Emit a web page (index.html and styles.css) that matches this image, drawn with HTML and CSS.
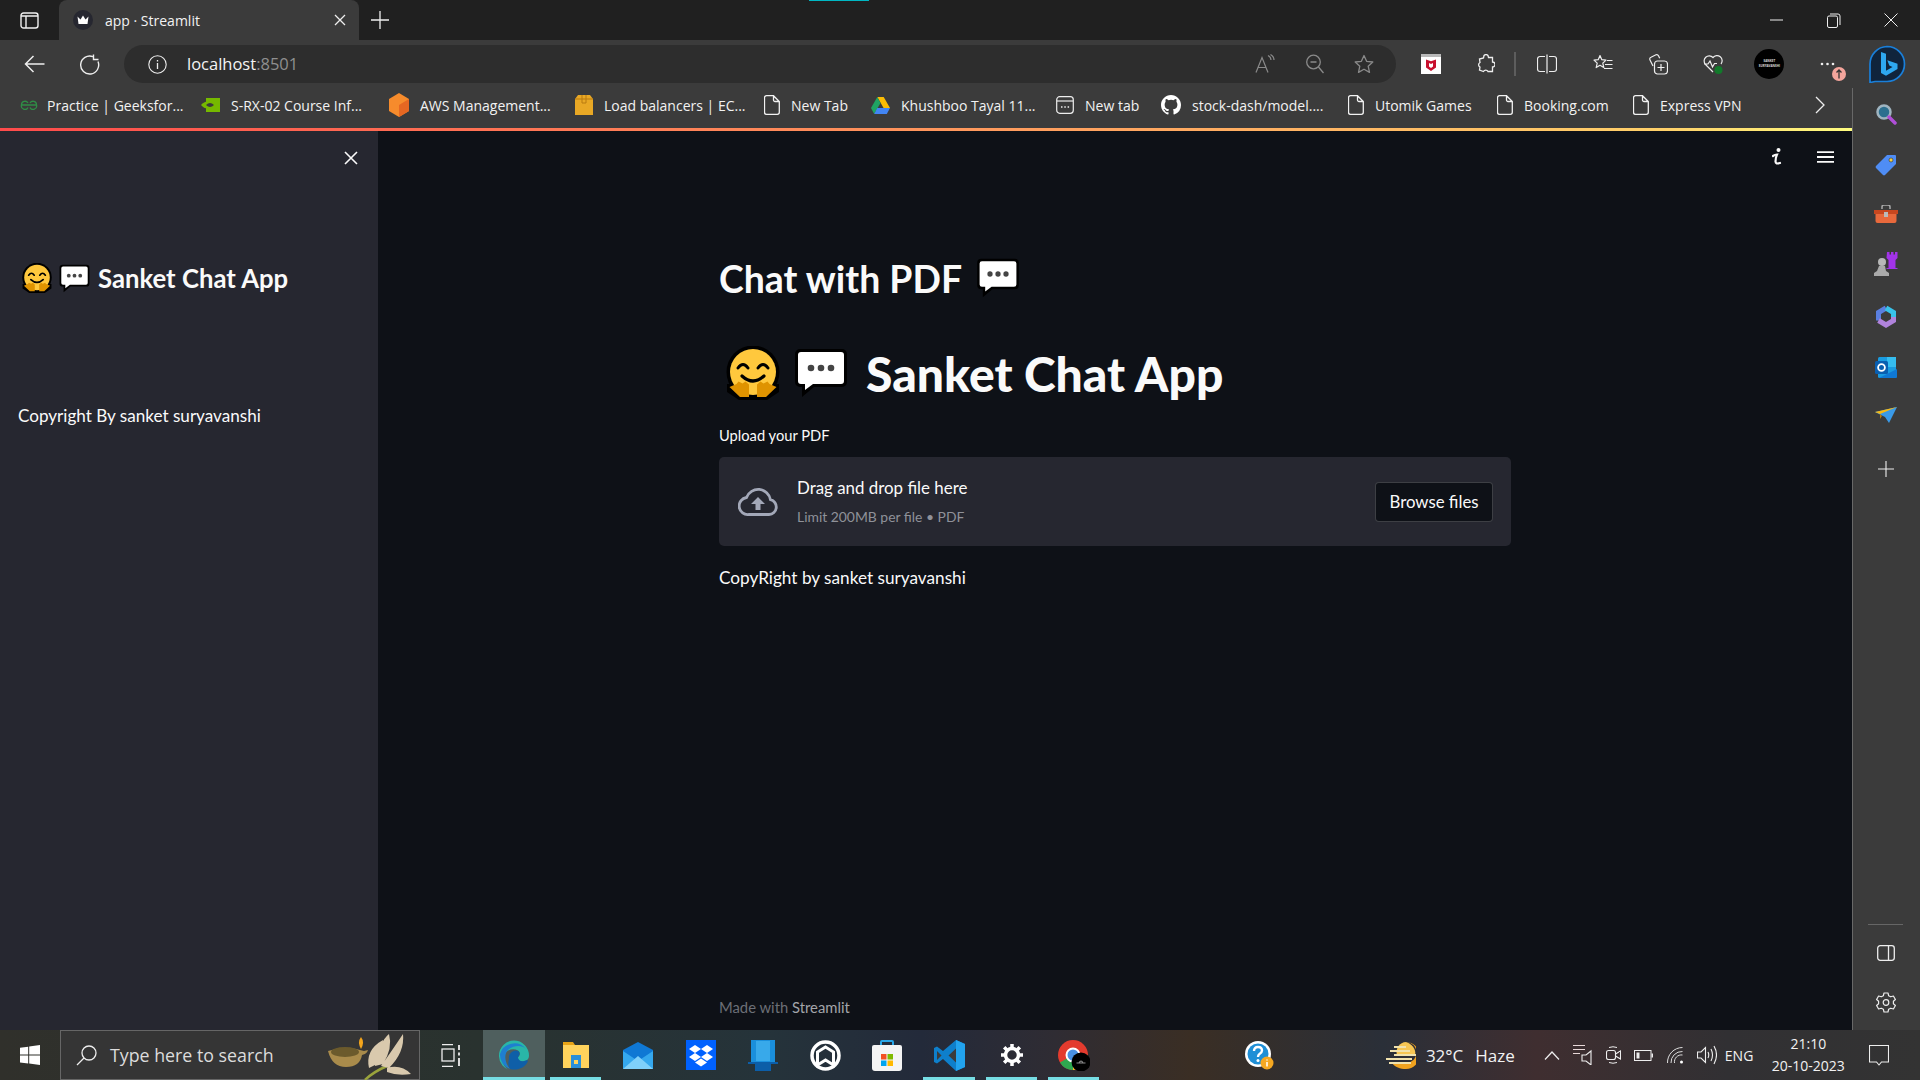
FILE: index.html
```html
<!DOCTYPE html>
<html lang="en">
<head>
  <meta charset="UTF-8">
  <title>app · Streamlit</title>
  <link rel="stylesheet" href="styles.css">
</head>
<body>

  <svg class="defs" width="0" height="0">
    <symbol id="doc" viewBox="0 0 16 20">
      <path d="M2.5 .7h7l5.8 5.8v10.8a2 2 0 0 1-2 2h-10.800a2 2 0 0 1-2-2v-14.600a2 2 0 0 1 2-2zM9.500 .7v4.300a1.500 1.500 0 0 0 1.500 1.500h4.300" fill="none" stroke="#f2f2f2" stroke-width="1.300"/>
    </symbol>
    <symbol id="hug" viewBox="0 0 54 54">
      <circle cx="27" cy="26" r="26.500" fill="#000"/>
      <path d="M1 38h52v8l-12 8h-28l-12-8z" fill="#000"/>
      <circle cx="27" cy="26" r="23" fill="#ffc83d"/>
      <path d="M12 22q5-7 10 0M32 22q5-7 10 0" fill="none" stroke="#000" stroke-width="3" stroke-linecap="round"/>
      <path d="M16 30q11 10 22 0" fill="none" stroke="#000" stroke-width="3.200" stroke-linecap="round"/>
      <path d="M3.500 41l7-3 2-2.500 4 2 3-2 3.500 3v12.500h-9z" fill="#df9300"/>
      <path d="M50.500 41l-7-3-2-2.500-4 2-3-2-3.500 3v12.500h9z" fill="#df9300"/>
    </symbol>
    <symbol id="bubble" viewBox="0 0 54 50">
      <path d="M6 1h42a5 5 0 0 1 5 5v28a5 5 0 0 1-5 5h-28l-12 10v-10h-2a5 5 0 0 1-5-5v-28a5 5 0 0 1 5-5z" fill="#000"/>
      <path d="M7 4h40a3 3 0 0 1 3 3v26a3 3 0 0 1-3 3h-28l-8 6v-6h-4a3 3 0 0 1-3-3v-26a3 3 0 0 1 3-3z" fill="#fff"/>
      <circle cx="17" cy="20" r="3.300" fill="#444"/><circle cx="27" cy="20" r="3.300" fill="#444"/><circle cx="37" cy="20" r="3.300" fill="#444"/>
    </symbol>
  </svg>

  <!-- barra de abas -->
  <div class="tabstrip">
    <div class="tab-toggle">
      <svg width="19" height="17" viewBox="0 0 19 17"><rect x="1" y="1" width="17" height="15" rx="2.500" fill="none" stroke="#f0f0f0" stroke-width="1.400"/><path d="M1 4h17M6 4v12" stroke="#f0f0f0" stroke-width="1.400"/></svg>
    </div>
    <div class="tab">
      <svg class="tab-favicon" width="20" height="20" viewBox="0 0 20 20"><circle cx="10" cy="10" r="10" fill="#262730"/><path d="M4.500 6.500l3 3 2.500-4 2.500 4 3-3-1 7.500h-9z" fill="#fff"/></svg>
      <span class="tab-title">app · Streamlit</span>
      <svg class="tab-close" width="12" height="12" viewBox="0 0 12 12"><path d="M1 1l10 10M11 1l-10 10" stroke="#eee" stroke-width="1.300"/></svg>
    </div>
    <svg class="tab-new" width="18" height="18" viewBox="0 0 18 18"><path d="M9 0v18M0 9h18" stroke="#eee" stroke-width="1.300"/></svg>
    <div class="tab-marker"></div>
    <div class="win-buttons">
      <div class="win-btn"><svg width="13" height="2" viewBox="0 0 13 2"><path d="M0 1h13" stroke="#eee"/></svg></div>
      <div class="win-btn"><svg width="14" height="15" viewBox="0 0 14 15"><rect x=".5" y="3" width="10" height="11.500" rx="1.500" fill="none" stroke="#eee"/><path d="M3 1h8a2 2 0 0 1 2 2v9" fill="none" stroke="#eee"/></svg></div>
      <div class="win-btn"><svg width="14" height="14" viewBox="0 0 14 14"><path d="M.5 .5l13 13M13.500 .5l-13 13" stroke="#eee"/></svg></div>
    </div>
  </div>

  <!-- barra de endereco -->
  <div class="toolbar">
    <div class="nav-btn">
      <svg width="21" height="18" viewBox="0 0 21 18"><path d="M20.500 9h-19M9.500 1l-8 8 8 8" fill="none" stroke="#eee" stroke-width="1.500"/></svg>
    </div>
    <div class="nav-btn">
      <svg width="21" height="21" viewBox="0 0 21 21"><path d="M13.800 2.600a9 9 0 1 0 5.200 5M14.500 .5v5h5" fill="none" stroke="#eee" stroke-width="1.400"/></svg>
    </div>
    <div class="address">
      <svg class="address-info" width="19" height="19" viewBox="0 0 19 19"><circle cx="9.500" cy="9.500" r="8.700" fill="none" stroke="#eee" stroke-width="1.100"/><path d="M9.500 8v6M9.500 5v1.400" stroke="#eee" stroke-width="1.300"/></svg>
      <span class="address-host">localhost<span class="address-port">:8501</span></span>
      <div class="address-tools">
        <div class="address-tool">
          <svg width="20" height="20" viewBox="0 0 20 20"><path d="M1 18.500l6-15 6 15M3.200 13.500h7.600M13 1.500q3 1.500 3 4.500M15.500 .5q3.500 2 3.500 5.500" fill="none" stroke="#8a8a8a" stroke-width="1.200"/></svg>
        </div>
        <div class="address-tool">
          <svg width="18" height="20" viewBox="0 0 18 20"><circle cx="7.500" cy="8" r="6.800" fill="none" stroke="#8a8a8a" stroke-width="1.300"/><path d="M4.500 8h6M12.500 13l5 6" stroke="#8a8a8a" stroke-width="1.300"/></svg>
        </div>
        <div class="address-tool">
          <svg width="20" height="20" viewBox="0 0 20 20"><path d="M10 1.500l2.600 5.800 6.200.7-4.600 4.200 1.300 6.200-5.500-3.200-5.500 3.200 1.300-6.200-4.600-4.200 6.200-.7z" fill="none" stroke="#8a8a8a" stroke-width="1.300" stroke-linejoin="round"/></svg>
        </div>
      </div>
    </div>
    <div class="tools">
      <div class="tool">
        <svg width="20" height="20" viewBox="0 0 20 20"><rect width="20" height="20" fill="#fff"/><rect width="20" height="3" fill="#b9b9b9"/><path d="M5 5.500l5 1.800 5-1.800v8l-5 3.500-5-3.500z" fill="#c8102e"/><path d="M8 9l2 1 2-1v3.500l-2 1.500-2-1.500z" fill="#fff"/></svg>
      </div>
      <div class="tool">
        <svg width="18" height="21" viewBox="0 0 18 21"><path d="M7 1.500a2.500 2.500 0 0 1 4 0l.5 2h4v4.500a2.500 2.500 0 0 1 0 5v4.500h-4.500a2.500 2.500 0 0 0-4.500 0l-4-1.500.5-3a2.500 2.500 0 0 1 0-4.500l-.5-3.500 4-1z" fill="none" stroke="#eee" stroke-width="1.300"/></svg>
      </div>
      <div class="tool-sep"></div>
      <div class="tool">
        <svg width="20" height="20" viewBox="0 0 20 20"><path d="M8 2.500h-5a2.500 2.500 0 0 0-2.500 2.500v10a2.500 2.500 0 0 0 2.500 2.500h5M12 2.500h5a2.500 2.500 0 0 1 2.500 2.500v10a2.500 2.500 0 0 1-2.500 2.500h-5M10 .5v19" fill="none" stroke="#eee" stroke-width="1.200"/></svg>
      </div>
      <div class="tool">
        <svg width="20" height="20" viewBox="0 0 20 20"><path d="M7 1.500l1.800 4.200 4.200.4-3.200 3 1 4.500-3.800-2.300-3.800 2.300 1-4.500-3.200-3 4.200-.4zM14 6.500h5.500M12 10.500h7.500M11 14.500h8.500" fill="none" stroke="#eee" stroke-width="1.200" stroke-linejoin="round"/></svg>
      </div>
      <div class="tool">
        <svg width="20" height="21" viewBox="0 0 20 21"><path d="M5 12l-3-6a2 2 0 0 1 1-2.800l5-2.400a2 2 0 0 1 2.500 1l1.200 2.400" fill="none" stroke="#eee" stroke-width="1.200"/><rect x="6.500" y="7" width="13" height="13" rx="3" fill="#3b3b3b" stroke="#eee" stroke-width="1.200"/><path d="M13 10v7M9.500 13.500h7" stroke="#eee" stroke-width="1.200"/></svg>
      </div>
      <div class="tool">
        <svg width="21" height="21" viewBox="0 0 21 21"><path d="M10 18l-7.500-7.500a5 5 0 0 1 7.500-7 5 5 0 0 1 8 6.500M1 10h4l2-3 2.500 6 2-3.500h2.500" fill="none" stroke="#eee" stroke-width="1.200"/><circle cx="15.500" cy="16" r="4" fill="#127a2b"/></svg>
      </div>
      <div class="tool">
        <div class="profile">SANKET<br>SURYAVANSHI</div>
      </div>
      <div class="tool tool-more">
        <svg width="15" height="4" viewBox="0 0 15 4"><circle cx="2" cy="2" r="1.300" fill="#eee"/><circle cx="7.500" cy="2" r="1.300" fill="#eee"/><circle cx="13" cy="2" r="1.300" fill="#eee"/></svg>
        <svg class="more-badge" width="14" height="14" viewBox="0 0 14 14"><circle cx="7" cy="7" r="7" fill="#f4a59c"/><path d="M7 11.500v-8M4.500 5.500l2.500-2.500 2.500 2.500" fill="none" stroke="#333" stroke-width="1.300"/></svg>
      </div>
      <div class="bing">
        <svg width="38" height="38" viewBox="0 0 38 38"><path d="M19 1.500a17.500 17.500 0 0 1 0 35h-12l-5 1v-18.500a17.500 17.500 0 0 1 17-17.500z" fill="#10243c" stroke="#1a7fd9" stroke-width="1.700"/><path d="M13 7l5 1.800v17l6.500-3.800-3.200-1.500-2-5.300 10.200 3.500v5.300l-11.500 6.800-5-2.800z" fill="#2ea8f0"/></svg>
      </div>
    </div>
  </div>

  <div class="body-row">
    <div class="page-col">

      <!-- favoritos -->
      <div class="bookmarks">
        <div class="bm">
          <svg class="bm-icon" width="18" height="10" viewBox="0 0 18 10"><path d="M1 5h16M1.500 5a3.500 3.500 0 0 1 6.500-2M16.500 5a3.500 3.500 0 0 0-6.500-2M1.500 5a3.500 3.500 0 0 0 6.500 2.500M16.500 5a3.500 3.500 0 0 1-6.500 2.500" fill="none" stroke="#2f8d46" stroke-width="1.300"/></svg>
          <span>Practice | Geeksfor...</span>
        </div>
        <div class="bm">
          <svg class="bm-icon" width="19" height="14" viewBox="0 0 19 14"><rect x="5" width="14" height="14" fill="#76b900"/><path d="M0 7q6-7 14 0q-8 7-14 0z" fill="#76b900"/><path d="M5 7q4-4 8 0q-4 4-8 0z" fill="#3b3b3b"/></svg>
          <span>S-RX-02 Course Inf...</span>
        </div>
        <div class="bm">
          <svg class="bm-icon" width="20" height="24" viewBox="0 0 20 24"><path d="M10 0l10 6v12l-10 6-10-6v-12z" fill="#f68b2c"/><path d="M10 12l10-6v12l-10 6z" fill="#e66722"/></svg>
          <span>AWS Management...</span>
        </div>
        <div class="bm">
          <svg class="bm-icon" width="18" height="20" viewBox="0 0 18 20"><path d="M3 0h12l3 4v16h-18v-16z" fill="#e9a825"/><path d="M0 4h18M7 0v8h4v-8" fill="none" stroke="#b97a10"/></svg>
          <span>Load balancers | EC...</span>
        </div>
        <div class="bm">
          <svg class="bm-icon"  width="16" height="20"><use href="#doc"/></svg>
          <span>New Tab</span>
        </div>
        <div class="bm">
          <svg class="bm-icon" width="19" height="17" viewBox="0 0 19 17"><path d="M6.300 0h6.400l6.300 11h-6.400z" fill="#fbbc04"/><path d="M6.300 0l-6.300 11 3.200 6 6.300-11z" fill="#1fa463"/><path d="M3.200 17h12.600l3.200-6h-12.700z" fill="#4285f4"/></svg>
          <span>Khushboo Tayal 11...</span>
        </div>
        <div class="bm">
          <svg class="bm-icon" width="18" height="18" viewBox="0 0 18 18"><rect x=".7" y=".7" width="16.600" height="16.600" rx="3" fill="none" stroke="#eee" stroke-width="1.200"/><path d="M1 5h16" stroke="#eee" stroke-width="1.200"/><path d="M5 11h1.500M8.300 11h1.500M11.600 11h1.500" stroke="#eee" stroke-width="1.600"/></svg>
          <span>New tab</span>
        </div>
        <div class="bm">
          <svg class="bm-icon" width="20" height="20" viewBox="0 0 16 16"><path fill="#fff" d="M8 0C3.580 0 0 3.580 0 8c0 3.540 2.290 6.530 5.470 7.590.4.070.55-.170.550-.380 0-.190-.010-.820-.010-1.490-2.010.370-2.530-.490-2.690-.940-.090-.230-.480-.940-.820-1.130-.280-.150-.680-.520-.010-.530.630-.010 1.080.580 1.230.820.720 1.210 1.870.870 2.330.660.070-.520.280-.870.510-1.070-1.780-.200-3.640-.890-3.640-3.950 0-.870.310-1.590.820-2.150-.080-.200-.360-1.020.080-2.120 0 0 .670-.210 2.200.820a7.420 7.420 0 0 1 4 0c1.530-1.040 2.200-.820 2.200-.820.440 1.100.160 1.920.080 2.120.510.560.820 1.270.820 2.150 0 3.070-1.870 3.750-3.650 3.950.290.250.540.730.540 1.480 0 1.070-.010 1.930-.010 2.200 0 .210.150.460.550.380A8.010 8.010 0 0 0 16 8c0-4.420-3.580-8-8-8z"/></svg>
          <span>stock-dash/model....</span>
        </div>
        <div class="bm">
          <svg class="bm-icon" width="16" height="20"><use href="#doc"/></svg>
          <span>Utomik Games</span>
        </div>
        <div class="bm">
          <svg class="bm-icon" width="16" height="20"><use href="#doc"/></svg>
          <span>Booking.com</span>
        </div>
        <div class="bm">
          <svg class="bm-icon" width="16" height="20"><use href="#doc"/></svg>
          <span>Express VPN</span>
        </div>
        <svg class="bm-more" width="10" height="18" viewBox="0 0 10 18"><path d="M1 1l8 8-8 8" fill="none" stroke="#eee" stroke-width="1.300"/></svg>
      </div>
      <div class="deco-line"></div>

      <div class="app">
        <aside class="sidebar">
          <div class="side-close">
            <svg width="14" height="14" viewBox="0 0 14 14"><path d="M1 1l12 12M13 1l-12 12" stroke="#fafafa" stroke-width="1.600"/></svg>
          </div>
          <h2 class="side-title">
            <svg width="30" height="30"><use href="#hug"/></svg>
            <svg width="31" height="29"><use href="#bubble"/></svg>
            <span>Sanket Chat App</span>
          </h2>
          <p class="side-copy">Copyright By sanket suryavanshi</p>
        </aside>

        <main class="main">
          <div class="main-head">
            <svg width="10" height="19" viewBox="0 0 10 19"><circle cx="6.500" cy="2" r="2" fill="#fafafa"/><path d="M1 8q2-1.500 4-1.500-1.500 3-1.500 7 0 3 4.500 1.500" fill="none" stroke="#fafafa" stroke-width="2.200" stroke-linecap="round"/></svg>
            <svg width="17" height="12" viewBox="0 0 17 12"><path d="M0 1.200h17M0 6h17M0 10.800h17" stroke="#fafafa" stroke-width="1.800"/></svg>
          </div>
          <div class="block">
            <h2 class="sub-title">
              <span>Chat with PDF</span>
              <svg width="44" height="40"><use href="#bubble"/></svg>
            </h2>
            <h1 class="app-title">
              <svg width="54" height="54"><use href="#hug"/></svg>
              <svg width="54" height="50"><use href="#bubble"/></svg>
              <span>Sanket Chat App</span>
            </h1>
            <label class="up-label">Upload your PDF</label>
            <div class="dropzone">
              <svg class="cloud" width="40" height="28" viewBox="0 0 40 28"><path d="M11 26.500h20a7.500 7.500 0 0 0 1.500-14.800 12.500 12.500 0 0 0-24-2.200 8.500 8.500 0 0 0 2.500 17z" fill="none" stroke="#a3a8b8" stroke-width="2.800"/><path d="M20 9l7 7h-4.500v6h-5v-6h-4.500z" fill="#a3a8b8"/></svg>
              <div class="drop-text">
                <div class="drop-main">Drag and drop file here</div>
                <div class="drop-sub">Limit 200MB per file • PDF</div>
              </div>
              <button class="browse">Browse files</button>
            </div>
            <p class="main-copy">CopyRight by sanket suryavanshi</p>
          </div>
          <div class="made-with">Made with <span class="made-name">Streamlit</span></div>
        </main>
      </div>
    </div>

    <!-- painel lateral do edge -->
    <div class="edge-panel">
      <svg class="edge-icon" width="22" height="22" viewBox="0 0 22 22"><circle cx="9" cy="9" r="6.500" fill="#2c6f8f" stroke="#9fb4c0" stroke-width="2.500"/><path d="M14 14l6 6" stroke="#b04fd8" stroke-width="3.500" stroke-linecap="round"/></svg>
      <svg class="edge-icon" width="22" height="22" viewBox="0 0 22 22"><path d="M12 1h8a1 1 0 0 1 1 1v8l-11 11a1.500 1.500 0 0 1-2 0l-7-7a1.500 1.500 0 0 1 0-2z" fill="#4f8df5"/><circle cx="16" cy="6" r="2" fill="#f4d03f" stroke="#333" stroke-width=".6"/></svg>
      <svg class="edge-icon" width="24" height="18" viewBox="0 0 24 18"><path d="M8 4v-2a2 2 0 0 1 2-2h4a2 2 0 0 1 2 2v2" fill="none" stroke="#aaa" stroke-width="1.500"/><path d="M0 5h24v4h-24z" fill="#c8471f"/><path d="M1.500 9h21v7a2 2 0 0 1-2 2h-17a2 2 0 0 1-2-2z" fill="#e8693c"/><rect x="10" y="7" width="4" height="5" fill="#bbb"/></svg>
      <svg class="edge-icon" width="24" height="24" viewBox="0 0 24 24"><path d="M13 0h2.500v2.500h1.500v-2.500h2.500v2.500h1.500v-2.500h2.500v6l-2 2v8l2 0v1h-11v-1l2 0v-8l-2-2z" fill="#a233e8"/><circle cx="8" cy="10" r="4" fill="#b8b8b8"/><path d="M5 14h6l1 5 3 2v3h-15v-3l3-2z" fill="#aaa"/></svg>
      <svg class="edge-icon" width="22" height="23" viewBox="0 0 22 23" fill="none" stroke-width="5"><path d="M3.500 15.500v-8l7.500-4.500" stroke="#5a7fe0"/><path d="M11 3l7.500 4.500v4.500" stroke="#38c3ea"/><path d="M18.500 12v3.500l-7.500 4.500-7.500-4.500" stroke="#b083dc"/></svg>
      <svg class="edge-icon" width="22" height="21" viewBox="0 0 22 21"><rect x="3" y="0" width="18" height="21" rx="1.500" fill="#1a9be0"/><path d="M12 0h9v10h-9z" fill="#35bdf0"/><path d="M4 21l18-9v8a1 1 0 0 1-1 1z" fill="#0f78d4"/><rect x="0" y="4" width="13" height="13" rx="1.500" fill="#0a5fb0"/><circle cx="6.500" cy="10.500" r="3.400" fill="none" stroke="#fff" stroke-width="1.800"/></svg>
      <svg class="edge-icon" width="22" height="16" viewBox="0 0 22 16"><path d="M0 5l22-5-8 16-4-6z" fill="#3a9ae8"/><path d="M0 5l22-5-17 7z" fill="#f8b912"/><path d="M5 7v5l2-3z" fill="#b87a10"/></svg>
      <svg class="edge-icon edge-plus" width="16" height="16" viewBox="0 0 16 16"><path d="M8 0v16M0 8h16" stroke="#eee" stroke-width="1.100"/></svg>

      <div class="edge-foot">
        <div class="edge-sep"></div>
        <svg width="18" height="16" viewBox="0 0 18 16"><rect x=".7" y=".7" width="16.600" height="14.600" rx="2.500" fill="none" stroke="#eee" stroke-width="1.300"/><path d="M11.500 1v14" stroke="#eee" stroke-width="1.300"/></svg>
        <svg width="20" height="21" viewBox="0 0 20 21"><path d="M8 1h4l.6 2.700 2.200 1.100 2.600-.8 2 3.500-2 1.800v2.400l2 1.800-2 3.500-2.600-.8-2.200 1.100-.6 2.700h-4l-.6-2.700-2.200-1.100-2.600.8-2-3.500 2-1.800v-2.400l-2-1.800 2-3.500 2.600.8 2.200-1.100z" fill="none" stroke="#eee" stroke-width="1.200" stroke-linejoin="round"/><circle cx="10" cy="10.500" r="2.800" fill="none" stroke="#eee" stroke-width="1.200"/></svg>
      </div>
    </div>
  </div>

  <!-- barra de tarefas -->
  <footer class="taskbar">
    <div class="start">
      <svg width="20" height="20" viewBox="0 0 20 20"><path d="M0 2.800l8.200-1.100v7.900h-8.200zM9.200 1.500l10.800-1.500v9.600h-10.800zM0 10.600h8.200v7.900l-8.200-1.100zM9.200 10.600h10.800v9.400l-10.800-1.500z" fill="#fff"/></svg>
    </div>
    <div class="search">
      <svg width="21" height="21" viewBox="0 0 21 21"><circle cx="13" cy="8" r="7" fill="none" stroke="#eee" stroke-width="1.300"/><path d="M8 13l-7 7" stroke="#eee" stroke-width="1.300"/></svg>
      <span class="search-text">Type here to search</span>
      <svg class="search-art" width="84" height="50" viewBox="0 0 84 50">
        <path d="M38 50q8-8 22-14" fill="none" stroke="#9aa33c" stroke-width="2.500"/>
        <path d="M42 38q-4-18 14-28q-2 14 2 20zM48 36q4-24 14-32q4 14-6 30zM54 36q10-14 22-32q2 18-14 34zM60 38q14-4 24 6q-14 2-24-2z" fill="#d9c9ad"/>
        <path d="M34 7q4 5 0 12q-4-7 0-12z" fill="#f4a51c"/>
        <path d="M1 21q18-6 36 0l4-1q-1 4-6 5q-2 12-16 12q-14 0-18-16z" fill="#a98b4b"/>
        <ellipse cx="18" cy="22" rx="14" ry="5" fill="#6b5a2c"/>
      </svg>
    </div>
    <div class="taskview">
      <svg width="20" height="23" viewBox="0 0 20 23"><path d="M1 .7h11M1 22.300h11M14 22.300h0" fill="none" stroke="#eee" stroke-width="1.300"/><rect x="1" y="5" width="12" height="12" fill="none" stroke="#eee" stroke-width="1.300"/><path d="M18 1v5M18 8.500v3M18 14v8" stroke="#eee" stroke-width="1.800"/></svg>
    </div>

    <div class="task-apps">
      <div class="task-app is-active is-open">
        <svg width="31" height="31" viewBox="0 0 31 31"><path d="M15 .5a15 15 0 0 1 15 15c0 4-3 6-7 6-3 0-5-2-5-4 3-1 4-5 1-7-6-3-14 0-15 8-1 6 3 11 8 12a15 15 0 0 1-12-15 15 15 0 0 1 15-15z" fill="#29b6a8"/><path d="M1 14a15 15 0 0 1 26-5c-3-4-12-4-17 0-6 5-4 14 1 20a15 15 0 0 1-10-15z" fill="#1f7fd0"/><path d="M10 19c-1-6 5-10 9-8 2 1 2 4 0 6 0 3 3 5 6 4 2-1 4-1 4 0-3 7-11 10-18 8-2-3-2-7-1-10z" fill="#0f5fa8"/></svg>
      </div>
      <div class="task-app is-open">
        <svg width="28" height="28" viewBox="0 0 28 28"><path d="M1 1h10l2 3h14v6h-26z" fill="#e8a416"/><rect x="1" y="4" width="26" height="23" fill="#ffd35c"/><path d="M9 14h10v13h-10z" fill="#2a8fd8"/><rect x="12" y="19" width="4" height="4" fill="#ffd35c"/></svg>
      </div>
      <div class="task-app">
        <svg width="30" height="27" viewBox="0 0 30 27"><path d="M0 8l15-8 15 8v19h-30z" fill="#0f78d4"/><path d="M0 9l15 10 15-10v18h-30z" fill="#35a8ee"/><path d="M0 27l15-13 15 13z" fill="#7fd0fa"/></svg>
      </div>
      <div class="task-app">
        <svg width="30" height="30" viewBox="0 0 30 30"><rect width="30" height="30" fill="#0061fe"/><path d="M9 5l6 4-6 4-6-4zM21 5l6 4-6 4-6-4zM9 13l6 4-6 4-6-4zM21 13l6 4-6 4-6-4zM15 18.500l6 4-6 4-6-4z" fill="#fff"/></svg>
      </div>
      <div class="task-app">
        <svg width="30" height="32" viewBox="0 0 30 32"><path d="M3 1h24v22h-24z" fill="#1a8fdc"/><path d="M8 2h14v20h-14z" fill="#38a9ea"/><path d="M0 23h30v2h-30z" fill="#0c5ea8"/><path d="M7 25h16v7h-16z" fill="#0c5ea8"/></svg>
      </div>
      <div class="task-app">
        <svg width="31" height="31" viewBox="0 0 31 31"><circle cx="15.500" cy="15.500" r="13.500" fill="none" stroke="#fff" stroke-width="3.500"/><path d="M15.500 7l8 5v13l-8-5-8 5v-13z" fill="none" stroke="#fff" stroke-width="3"/></svg>
      </div>
      <div class="task-app">
        <svg width="30" height="31" viewBox="0 0 30 31"><path d="M9 6v-4a1 1 0 0 1 1-1h10a1 1 0 0 1 1 1v4" fill="none" stroke="#29a7e8" stroke-width="2"/><path d="M2 5h26a2 2 0 0 1 2 2v21a3 3 0 0 1-3 3h-24a3 3 0 0 1-3-3v-21a2 2 0 0 1 2-2z" fill="#f4f4f4"/><rect x="9" y="14" width="5.500" height="5.500" fill="#f25022"/><rect x="15.500" y="14" width="5.500" height="5.500" fill="#7fba00"/><rect x="9" y="20.500" width="5.500" height="5.500" fill="#00a4ef"/><rect x="15.500" y="20.500" width="5.500" height="5.500" fill="#ffb900"/></svg>
      </div>
      <div class="task-app is-open">
        <svg width="31" height="31" viewBox="0 0 31 31"><path d="M22 0l9 4v23l-9 4-13-12-6 4.500-3-1.500v-14l3-1.500 6 4.500z" fill="#0e7fcb"/><path d="M22 0l9 4v23l-9 4z" fill="#22a3ee"/><path d="M22 8.500l-7.500 7 7.500 7z" fill="#3b3b3b"/><path d="M3 11l4.500 4.500-4.500 4.500z" fill="#3b3b3b"/></svg>
      </div>
      <div class="task-app is-open">
        <svg width="24" height="24" viewBox="0 0 24 24"><circle cx="12" cy="12" r="6.500" fill="none" stroke="#fff" stroke-width="3.500"/><path d="M12 1v5M12 18v5M1 12h5M18 12h5M4.200 4.200l3.500 3.500M16.300 16.300l3.500 3.500M19.800 4.200l-3.500 3.500M7.700 16.300l-3.500 3.500" stroke="#fff" stroke-width="3.500"/></svg>
      </div>
      <div class="task-app is-open">
        <svg width="32" height="31" viewBox="0 0 32 31"><circle cx="15" cy="15" r="15" fill="#e33b2e"/><path d="M15 15l-13 7.500a15 15 0 0 0 13 7.500z" fill="#2fa84f"/><path d="M15 15h15a15 15 0 0 1-15 15z" fill="#fbc02d"/><circle cx="15" cy="15" r="6.500" fill="#4a90e2" stroke="#fff" stroke-width="2"/><circle cx="23" cy="22" r="9.500" fill="#000"/><path d="M18.500 23h9M21 23q2-4 4 0" stroke="#888" stroke-width="1.200" fill="none"/></svg>
      </div>
    </div>

    <div class="help">
      <svg width="30" height="30" viewBox="0 0 30 30"><circle cx="14" cy="14" r="13" fill="#fff"/><circle cx="14" cy="14" r="10.500" fill="#1f8fd6"/><path d="M10 11q0-4 4-4t4 3.500q0 2-2.500 3.500-1.500 1-1.500 3" fill="none" stroke="#fff" stroke-width="2.400"/><circle cx="14" cy="20.500" r="1.500" fill="#fff"/><circle cx="23" cy="23" r="6.500" fill="#f6a821"/><path d="M23 22v4.500M23 19.500v1" stroke="#fff" stroke-width="1.500"/></svg>
    </div>
    <div class="weather">
      <svg width="30" height="27" viewBox="0 0 30 27"><path d="M20 0a13.500 13.500 0 0 1 0 27c-6 0-11-2-14-6h14a10 10 0 0 0 0-21z" fill="#f0a21f"/><path d="M11 13a10 10 0 0 1 9-13c9 3 10 10 9 14z" fill="#f7c653"/><path d="M8 5h12M4 9h20M8 13h22M0 17h26M3 21h22" stroke="#f1e2ad" stroke-width="2.200"/></svg>
      <span>32°C</span>
      <span class="weather-desc">Haze</span>
    </div>
    <div class="tray">
      <svg width="16" height="9" viewBox="0 0 16 9"><path d="M1 8.500l7-7.500 7 7.500" fill="none" stroke="#eee" stroke-width="1.200"/></svg>
      <svg width="19" height="20" viewBox="0 0 19 20"><path d="M0 .5h12M0 4.500h12M0 8.500h7" stroke="#e8d8d8" stroke-width="1.100"/><path d="M18 6v14l-5-4h-4v-6h4z" fill="none" stroke="#eee" stroke-width="1.100"/></svg>
      <svg width="15" height="18" viewBox="0 0 15 18"><path d="M3 1.500q4-1.500 8 0M3 16.500q4 1.500 8 0" fill="none" stroke="#eee"/><rect x=".5" y="4.500" width="9" height="9" rx="2" fill="none" stroke="#eee" stroke-width="1.100"/><path d="M9.500 8l5-3v8l-5-3" fill="none" stroke="#eee" stroke-width="1.100"/></svg>
      <svg width="19" height="11" viewBox="0 0 19 11"><rect x=".5" y=".5" width="16.500" height="10" fill="none" stroke="#eee"/><rect x="2.500" y="2.500" width="3" height="6" fill="#eee"/><rect x="17.500" y="3.500" width="1.500" height="4" fill="#eee"/></svg>
      <svg width="17" height="17" viewBox="0 0 17 17"><path d="M.5 16a15 15 0 0 1 15-15.500M4 16a11 11 0 0 1 11.500-11.500M7.500 16a7 7 0 0 1 8-8" fill="none" stroke="#ddd"/><circle cx="14.500" cy="15" r="1.500" fill="#fff"/></svg>
      <svg width="20" height="20" viewBox="0 0 20 20"><path d="M.5 7h3.500l4.500-4.500v15l-4.500-4.500h-3.500z" fill="none" stroke="#eee" stroke-width="1.100"/><path d="M11 7q1.500 3 0 6M14 4q3 6 0 12M17 1q5 9 0 18" fill="none" stroke="#eee" stroke-width="1.100"/></svg>
      <span class="tray-lang">ENG</span>
    </div>
    <div class="clock">
      <div>21:10</div>
      <div>20-10-2023</div>
    </div>
    <svg class="notif" width="20" height="21" viewBox="0 0 20 21"><path d="M.5 .5h19v16.500h-7l-2.500 3-2.500-3h-7z" fill="none" stroke="#eee" stroke-width="1.100"/></svg>
  </footer>

</body>
</html>
```

FILE: styles.css
```css
* { box-sizing: border-box; }
html, body { margin: 0; height: 100%; }
body {
  width: 1920px;
  height: 1080px;
  overflow: hidden;
  display: flex;
  flex-direction: column;
  background-color: #3b3b3b;
  color: #fafafa;
  font-family: "Open Sans", "Noto Sans", sans-serif;
}
svg { display: block; flex: none; }
.defs { position: absolute; }

/* abas */
.tabstrip {
  height: 40px;
  display: flex;
  align-items: center;
  background-color: #202020;
  position: relative;
}
.tab-toggle { width: 59px; display: flex; justify-content: center; }
.tab {
  width: 300px;
  height: 40px;
  display: flex;
  align-items: center;
  padding-left: 14px;
  background-color: #3b3b3b;
  border-radius: 8px 8px 0 0;
}
.tab-title { margin-left: 12px; font-size: 14px; color: #f2f2f2; }
.tab-close { margin-left: auto; margin-right: 13px; }
.tab-new { margin-left: 12px; }
.tab-marker {
  position: absolute;
  left: 809px;
  top: 0;
  width: 60px;
  height: 1px;
  background-color: #00b7c3;
}
.win-buttons { margin-left: auto; display: flex; }
.win-btn { width: 57.500px; display: flex; justify-content: center; align-items: center; }

/* endereco */
.toolbar {
  height: 48px;
  display: flex;
  align-items: center;
  background-color: #3b3b3b;
}
.nav-btn { width: 55px; display: flex; justify-content: center; margin-left: 7px; margin-right: -7.500px; }
.address {
  width: 1272px;
  height: 38px;
  margin-left: 15px;
  display: flex;
  align-items: center;
  padding: 0 7px 0 24px;
  background-color: #2d2d2d;
  border-radius: 19px;
}
.address-host { margin: 0 0 2px 20px; font-size: 16.500px; color: #f4f4f4; }
.address-port { color: #8f8f8f; }
.address-tools { margin-left: auto; display: flex; }
.address-tool { width: 49.500px; display: flex; justify-content: center; }
.tools { margin-left: 7px; display: flex; align-items: center; }
.tool { width: 55.600px; display: flex; justify-content: center; position: relative; }
.tool-sep { width: 5px; height: 24px; border-left: 2px solid #5d5d5d; }
.profile {
  width: 30px;
  height: 30px;
  border-radius: 50%;
  background-color: #000;
  color: #ddd;
  font-size: 3px;
  font-weight: 700;
  line-height: 5px;
  text-align: center;
  padding-top: 10px;
}
.tool-more { margin-left: 3px; }
.more-badge { position: absolute; left: 32px; top: 5px; }
.bing { margin-left: 12px; }

.body-row { flex: 1; display: flex; min-height: 0; }
.page-col { width: 1852px; display: flex; flex-direction: column; }

/* favoritos */
.bookmarks {
  height: 40px;
  padding: 0 0 6px 20px;
  display: grid;
  grid-template-columns: 181px 188px 186px 189px 107px 185px 105px 187px 149px 136px 182px 10px;
  align-items: center;
  background-color: #3b3b3b;
}
.bm { display: flex; align-items: center; font-size: 14px; color: #f2f2f2; white-space: nowrap; }
.bm-icon { margin-right: 11px; }
.bm:first-child .bm-icon { margin-right: 9px; }
.deco-line {
  height: 3px;
  background: linear-gradient(90deg, #ff4b4b, #ffd16a 90%, #fffd80);
}

.app { flex: 1; display: flex; min-height: 0; }

/* sidebar */
.sidebar { width: 378px; padding: 0 18px; background-color: #262730; font-family: Lato, "Open Sans", sans-serif; }
.side-close { height: 54px; display: flex; align-items: center; justify-content: flex-end; padding-right: 2px; }
.side-title {
  margin: 78px 0 0 4px;
  display: flex;
  align-items: center;
  gap: 7px;
  height: 30px;
  font-size: 25.700px;
  font-weight: 700;
}
.side-title span { margin-left: 1px; }
.side-copy { margin: 111px 0 0; font-size: 17.100px; line-height: 24px; }

/* main */
.main {
  flex: 1;
  display: flex;
  flex-direction: column;
  align-items: center;
  background-color: #0e1117;
  font-family: Lato, "Open Sans", sans-serif;
}
.main-head {
  width: 100%;
  height: 52px;
  display: flex;
  align-items: center;
  justify-content: flex-end;
  gap: 39px;
  padding-right: 18px;
}
.main-head svg:first-child { margin-right: -4px; }
.block { width: 792px; }
.sub-title {
  margin: 75px 0 0;
  height: 40px;
  display: flex;
  align-items: center;
  gap: 14px;
  font-size: 37.400px;
  font-weight: 700;
}
.app-title {
  margin: 48px 0 0 7px;
  height: 54px;
  display: flex;
  align-items: center;
  gap: 14px;
  font-size: 48px;
  font-weight: 900;
}
.app-title span { margin-left: 4px; }
.up-label { display: block; margin-top: 25px; font-size: 14.700px; line-height: 20px; }
.dropzone {
  height: 89px;
  margin-top: 12px;
  display: flex;
  align-items: center;
  padding: 0 18px 0 19px;
  background-color: #262730;
  border-radius: 5px;
}
.drop-text { margin-left: 19px; }
.drop-main { font-size: 16.900px; line-height: 22px; }
.drop-sub { margin-top: 8px; font-size: 13.900px; line-height: 20px; color: #8f9199; }
.browse {
  width: 118px;
  height: 40px;
  margin-left: auto;
  background-color: #0e1117;
  color: #fafafa;
  border: 1px solid rgba(250, 250, 250, 0.2);
  border-radius: 4px;
  font-family: inherit;
  font-size: 16.800px;
}
.main-copy { margin: 20px 0 0; font-size: 17.200px; line-height: 24px; }
.made-with {
  width: 792px;
  margin-top: auto;
  padding-bottom: 13px;
  font-size: 14.800px;
  line-height: 20px;
  color: #6c6f76;
}
.made-name { color: #a3a5aa; }

/* painel edge */
.edge-panel {
  width: 68px;
  display: flex;
  flex-direction: column;
  align-items: center;
  border-left: 1px solid #686868;
  background-color: #3b3b3b;
  padding-top: 15px;
  padding-right: 2px;
}
.edge-icon { margin-bottom: 29px; }
.edge-plus { margin-top: 9px; }
.edge-foot { margin-top: auto; display: flex; flex-direction: column; align-items: center; }
.edge-sep { width: 35px; height: 1px; background-color: #666; margin-bottom: 20px; }
.edge-foot svg:last-child { margin-top: 31px; margin-bottom: 17px; }

/* taskbar */
.taskbar {
  height: 50px;
  display: flex;
  align-items: center;
  color: #f2f2f2;
  background: linear-gradient(90deg, #30302b 0, #29322f 25%, #25333a 40%, #232a3a 48%, #2f2c33 55%, #3a2e24 62%, #2a2f38 72%, #3f2e30 80%, #313033 90%, #333 100%);
}
.start { width: 60px; display: flex; justify-content: center; }
.search {
  width: 360px;
  height: 50px;
  display: flex;
  align-items: center;
  padding-left: 15px;
  background-color: #353535;
  border: 1px solid #666;
  position: relative;
}
.search-text { margin-left: 13px; font-size: 17.800px; color: #dcdcdc; }
.search-art { position: absolute; right: 8px; top: -1px; }
.taskview { width: 62px; display: flex; justify-content: center; }
.task-apps { display: flex; margin-left: 1px; }
.task-app {
  width: 62.200px;
  height: 50px;
  display: flex;
  align-items: center;
  justify-content: center;
  position: relative;
}
.task-app.is-active { background-color: #4f5f5e; }
.task-app.is-open::after {
  content: "";
  position: absolute;
  left: 5px;
  right: 6px;
  bottom: 0;
  height: 3px;
  background-color: #76dde4;
}
.task-app.is-active::after { left: 0; right: 0; }
.help { margin-left: 139px; }
.weather {
  margin-left: 112px;
  display: flex;
  align-items: center;
  font-size: 17px;
}
.weather span { margin-left: 10px; }
.weather .weather-desc { margin-left: 12px; }
.tray {
  margin-left: 29px;
  display: flex;
  align-items: center;
  gap: 13.500px;
}
.tray-lang { margin-left: -6px; font-size: 14px; }
.clock { width: 90px; margin-left: 10px; text-align: center; font-size: 14px; line-height: 22px; }
.notif { margin-left: 16px; }
```
